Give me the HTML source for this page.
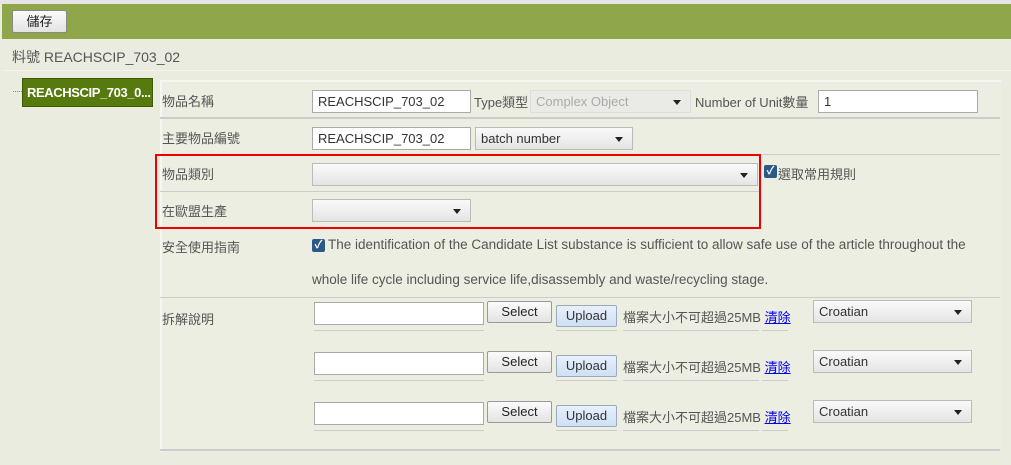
<!DOCTYPE html>
<html><head><meta charset="utf-8"><style>
*{box-sizing:border-box;margin:0;padding:0}
body{width:1011px;height:465px;overflow:hidden;background:#e9ecde;font-family:"Liberation Sans","Noto Sans CJK TC",sans-serif;font-size:13px;color:#555;position:relative}
.a{position:absolute;white-space:nowrap}
.inp{position:absolute;background:#fff;border:1px solid #aaa;height:23px;padding:3px 5px;color:#333;font-size:13px}
.sel{position:absolute;border:1px solid #bbb;height:23px;padding:3px 5px;color:#333;background:linear-gradient(#fafafa,#e4e4e4);font-size:13px}
.sel:after{content:"";position:absolute;right:9px;top:9px;border:4px solid transparent;border-top:5px solid #222;border-bottom:0}
.btn{position:absolute;border:1px solid #999;border-radius:2px;background:linear-gradient(#fbfbfb,#e3e3e3);color:#222;text-align:center;font-size:13px;line-height:19px}
.up{position:absolute;border:1px solid #9ab;border-radius:2px;background:linear-gradient(#e8f0fb,#cfe0f5);color:#333;text-align:center;font-size:13px;line-height:20px}
.hl{position:absolute;left:160px;width:840px;height:2px;background:#ccc}
.ul{position:absolute;height:1px;background:#ccc}
a{color:#00e;text-decoration:underline}
.cb{position:absolute;width:13px;height:13px;background:#2c5a88;border-radius:2px;color:#fff;font-size:11px;line-height:13px;text-align:center;font-weight:bold}
</style></head><body>
<div class="a" style="left:0;top:0;width:1011px;height:4px;background:#e5e5e5"></div>
<div class="a" style="left:2px;top:4px;width:1009px;height:35px;background:#8fa74a"></div>
<div class="btn" style="left:12px;top:10px;width:55px;height:23px;line-height:21px;border-color:#888">儲存</div>
<div class="a" style="left:12px;top:47px;font-size:14px;color:#555">料號 REACHSCIP_703_02</div>
<div class="a" style="left:2px;top:70px;width:1009px;height:1px;background:#f4f4ee"></div>
<div class="a" style="left:13px;top:91px;width:9px;border-top:1px dotted #888"></div>
<div class="a" style="left:22px;top:78px;width:131px;height:29px;background:#567a0e;border:1px solid #3d5a05;color:#fff;font-weight:bold;font-size:13px;padding:6px 0 0 4px;letter-spacing:-0.4px;overflow:hidden">REACHSCIP_703_0...</div>
<div class="a" style="left:160px;top:80px;width:841px;height:372px;background:#ebeee1;border-left:2px solid #f6f6f2;border-top:2px solid #f6f6f2"></div>

<div class="a" style="left:162px;top:91px">物品名稱</div>
<div class="inp" style="left:312px;top:90px;width:159px">REACHSCIP_703_02</div>
<div class="a" style="left:474px;top:92px">Type類型</div>
<div class="sel" style="left:530px;top:90px;width:161px;color:#aaa;background:#eaeae6;border-color:#ddd">Complex Object</div>
<div class="a" style="left:695px;top:92px">Number of Unit數量</div>
<div class="inp" style="left:818px;top:90px;width:160px">1</div>
<div class="hl" style="top:117px"></div>

<div class="a" style="left:162px;top:128px">主要物品編號</div>
<div class="inp" style="left:312px;top:127px;width:159px">REACHSCIP_703_02</div>
<div class="sel" style="left:475px;top:127px;width:158px">batch number</div>
<div class="ul" style="left:160px;top:154px;width:840px"></div>

<div class="a" style="left:162px;top:164px">物品類別</div>
<div class="sel" style="left:312px;top:163px;width:446px"></div>
<div class="cb" style="left:764px;top:165px">✓</div>
<div class="a" style="left:778px;top:164px">選取常用規則</div>
<div class="ul" style="left:160px;top:191px;width:600px"></div>

<div class="a" style="left:162px;top:201px">在歐盟生產</div>
<div class="sel" style="left:312px;top:199px;width:159px"></div>
<div class="a" style="left:155px;top:154px;width:606px;height:75px;border:2px solid #e00"></div>

<div class="a" style="left:162px;top:237px">安全使用指南</div>
<div class="cb" style="left:312px;top:239px">✓</div>
<div class="a" style="left:328px;top:237px;font-size:13.5px">The identification of the Candidate List substance is sufficient to allow safe use of the article throughout the</div>
<div class="a" style="left:312px;top:272px;font-size:13.5px">whole life cycle including service life,disassembly and waste/recycling stage.</div>
<div class="ul" style="left:160px;top:297px;width:840px"></div>

<div class="a" style="left:162px;top:309px">拆解說明</div>

<div class="inp" style="left:314px;top:302px;width:170px"></div>
<div class="btn" style="left:487px;top:301px;width:65px;height:22px">Select</div>
<div class="up" style="left:556px;top:305px;width:61px;height:22px">Upload</div>
<div class="a" style="left:623px;top:307px">檔案大小不可超過25MB <a>清除</a></div>
<div class="sel" style="left:813px;top:300px;width:159px">Croatian</div>
<div class="ul" style="left:314px;top:330px;width:170px"></div><div class="ul" style="left:556px;top:330px;width:61px"></div><div class="ul" style="left:623px;top:330px;width:136px"></div><div class="ul" style="left:762px;top:330px;width:26px"></div>

<div class="inp" style="left:314px;top:352px;width:170px"></div>
<div class="btn" style="left:487px;top:351px;width:65px;height:22px">Select</div>
<div class="up" style="left:556px;top:355px;width:61px;height:22px">Upload</div>
<div class="a" style="left:623px;top:357px">檔案大小不可超過25MB <a>清除</a></div>
<div class="sel" style="left:813px;top:350px;width:159px">Croatian</div>
<div class="ul" style="left:314px;top:380px;width:170px"></div><div class="ul" style="left:556px;top:380px;width:61px"></div><div class="ul" style="left:623px;top:380px;width:136px"></div><div class="ul" style="left:762px;top:380px;width:26px"></div>

<div class="inp" style="left:314px;top:402px;width:170px"></div>
<div class="btn" style="left:487px;top:401px;width:65px;height:22px">Select</div>
<div class="up" style="left:556px;top:405px;width:61px;height:22px">Upload</div>
<div class="a" style="left:623px;top:407px">檔案大小不可超過25MB <a>清除</a></div>
<div class="sel" style="left:813px;top:400px;width:159px">Croatian</div>
<div class="ul" style="left:314px;top:430px;width:170px"></div><div class="ul" style="left:556px;top:430px;width:61px"></div><div class="ul" style="left:623px;top:430px;width:136px"></div><div class="ul" style="left:762px;top:430px;width:26px"></div>

<div class="hl" style="top:449px"></div>
</body></html>
